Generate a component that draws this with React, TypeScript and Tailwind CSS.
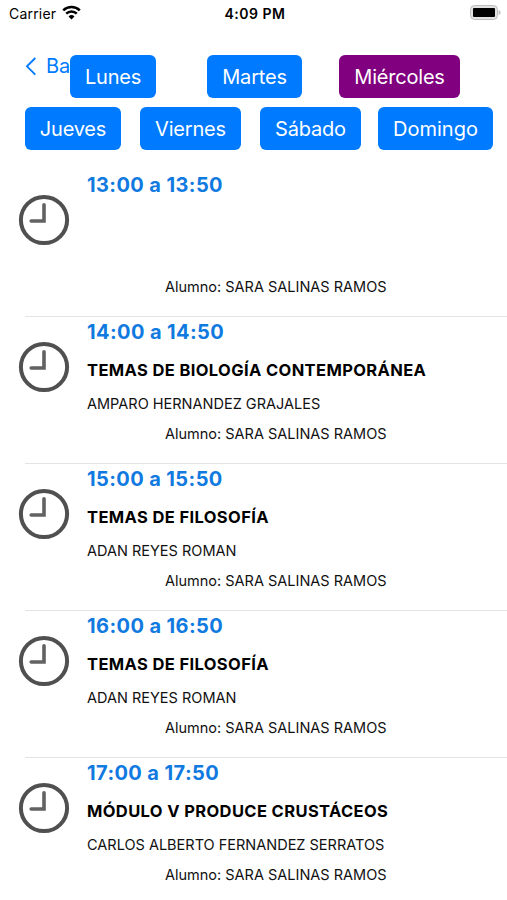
type DayProps = {
    label: string;
    className: string;
    active?: boolean;
};

type ClassProps = {
    time: string;
    subject?: string;
    teacher?: string;
};

const student = "SARA SALINAS RAMOS";

const classes: ClassProps[] = [
    { time: "13:00 a 13:50" },
    {
        time: "14:00 a 14:50",
        subject: "TEMAS DE BIOLOGÍA CONTEMPORÁNEA",
        teacher: "AMPARO HERNANDEZ GRAJALES",
    },
    {
        time: "15:00 a 15:50",
        subject: "TEMAS DE FILOSOFÍA",
        teacher: "ADAN REYES ROMAN",
    },
    {
        time: "16:00 a 16:50",
        subject: "TEMAS DE FILOSOFÍA",
        teacher: "ADAN REYES ROMAN",
    },
    {
        time: "17:00 a 17:50",
        subject: "MÓDULO V PRODUCE CRUSTÁCEOS",
        teacher: "CARLOS ALBERTO FERNANDEZ SERRATOS",
    },
];

function StatusBar() {
    return (
        <div className="grid h-7 grid-cols-3 items-center pr-[6px] pl-[9px] text-sm">
            <div className="flex items-center gap-1.5">
                <span className="tracking-[0.2px]">Carrier</span>
                <svg
                    className="-mt-[3px]"
                    width="19"
                    height="15"
                    viewBox="0 0 19 15"
                >
                    <path
                        d="M1.2 5.4a11.8 11.8 0 0 1 16.6 0M4.2 8.7a7.5 7.5 0 0 1 10.6 0"
                        fill="none"
                        stroke="#000"
                        strokeWidth="2.5"
                    />
                    <path d="M9.5 14.4 6.5 11.4a4.3 4.3 0 0 1 6 0z" />
                </svg>
            </div>
            <span className="text-center font-semibold tracking-[0.5px]">
                4:09 PM
            </span>
            <svg
                className="-mt-[3px] justify-self-end"
                width="31"
                height="15"
                viewBox="0 0 31 15"
            >
                <rect
                    x="0.5"
                    y="0.5"
                    width="27"
                    height="14"
                    rx="4"
                    fill="#e2e2e2"
                    stroke="#bdbdbd"
                />
                <rect x="3" y="3" width="22" height="9" rx="1" />
                <path d="M28.6 5q2 .7 2 2.5t-2 2.5z" fill="#bdbdbd" />
            </svg>
        </div>
    );
}

function DayButton({ label, className, active }: DayProps) {
    return (
        <button
            className={`h-[43px] rounded-md text-[20px] text-white ${
                active ? "bg-[#800080]" : "bg-[#007aff]"
            } ${className}`}
        >
            {label}
        </button>
    );
}

function ClockIcon() {
    return (
        <svg width="52" height="52" viewBox="0 0 52 52" fill="none">
            <circle cx="26" cy="26" r="23.1" stroke="#505050" strokeWidth="4" />
            <path
                d="M26 10.8V27H13.2"
                stroke="#626262"
                strokeWidth="3.6"
                strokeLinecap="round"
            />
        </svg>
    );
}

function ClassRow({ time, subject, teacher }: ClassProps) {
    return (
        <li className="group h-[147px]">
            <div className="flex h-[146px] pl-[18px]">
                <div className="w-[69px] pt-6">
                    <ClockIcon />
                </div>
                <div className="flex-1 whitespace-nowrap">
                    <h3 className="h-[37px] pt-px text-[20px] leading-7 font-bold tracking-[0.4px] text-[#107ae0]">
                        {time}
                    </h3>
                    <p className="h-[35px] text-[16.5px] leading-[33px] font-bold tracking-[0.38px]">
                        {subject}
                    </p>
                    <p className="h-[30px] text-[14.5px] leading-[30px] text-[#111]">
                        {teacher}
                    </p>
                    <p className="pl-[78px] text-[14.5px] leading-[30px] text-[#111]">
                        Alumno: {student}
                    </p>
                </div>
            </div>
            <div className="ml-[25px] h-px bg-[#e4e4e6] group-last:hidden" />
        </li>
    );
}

export default function App() {
    return (
        <div className="h-[900px] w-[507px] overflow-hidden bg-white font-['Inter',sans-serif] text-black">
            <StatusBar />
            <div className="mt-[27px] flex pl-[25px]">
                <div className="flex h-[22px] w-[45px] items-center gap-[9px] text-[20px] text-[#007aff]">
                    <svg
                        className="shrink-0"
                        width="12"
                        height="20"
                        viewBox="0 0 12 20"
                    >
                        <path
                            d="M10.3 2 2 10.3l8.3 8.3"
                            fill="none"
                            stroke="currentColor"
                            strokeWidth="1.9"
                        />
                    </svg>
                    <span>Ba</span>
                </div>
                <DayButton
                    label="Lunes"
                    className="w-[86px] tracking-[-0.2px]"
                />
                <DayButton
                    label="Martes"
                    className="ml-[51px] w-[95px] tracking-[-0.2px]"
                />
                <DayButton
                    label="Miércoles"
                    className="ml-[37px] w-[121px] tracking-[-0.2px]"
                    active
                />
            </div>
            <div className="mt-[9px] flex pl-[25px]">
                <DayButton
                    label="Jueves"
                    className="w-[96px] tracking-[-0.2px]"
                />
                <DayButton
                    label="Viernes"
                    className="ml-[19px] w-[101px] tracking-[-0.2px]"
                />
                <DayButton
                    label="Sábado"
                    className="ml-[19px] w-[101px] tracking-[-0.2px]"
                />
                <DayButton label="Domingo" className="ml-[17px] w-[115px]" />
            </div>
            <ul className="mt-5">
                {classes.map((item) => (
                    <ClassRow key={item.time} {...item} />
                ))}
            </ul>
        </div>
    );
}
